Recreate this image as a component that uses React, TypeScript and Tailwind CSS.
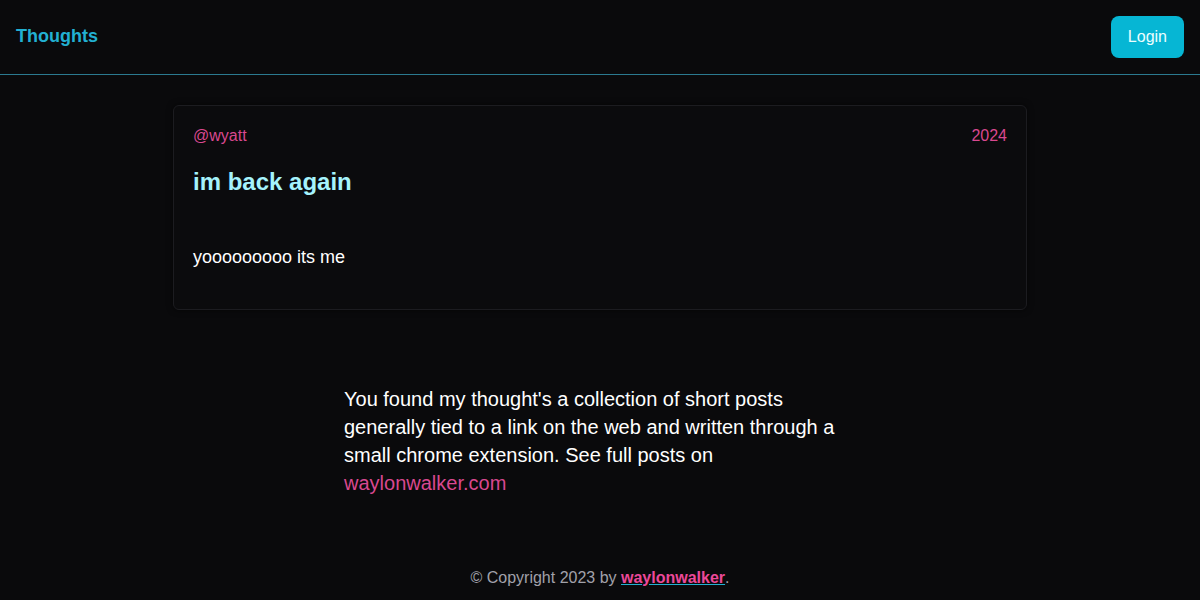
export default function App() {
  return (
    <div className="min-h-[600px] bg-[#0a0a0c] text-white flex flex-col" style={{ fontFamily: '"Liberation Sans", Arial, sans-serif' }}>
      <header className="h-[75px] border-b border-[#2b7a90] flex items-center justify-between px-4">
        <a className="text-[18px] font-bold text-[#22b0d2] leading-[24px] -mt-[3px]">Thoughts</a>
        <button className="h-[42px] px-[17px] rounded-lg bg-[#06b6d4] text-[16px] text-[#ecfeff]">Login</button>
      </header>
      <main className="flex flex-col items-center">
        <div className="mt-[30px] w-[854px] border border-[#1c1c20] rounded-md bg-[#0b0b0d] px-[19px] pt-[18px] pb-[38px] shadow-[0_0_6px_rgba(0,0,0,0.6)]">
          <div className="flex justify-between text-[16px] leading-[24px] text-[#d9488f]">
            <span>@wyatt</span>
            <span>2024</span>
          </div>
          <h2 className="mt-[18px] text-[24px] leading-[32px] font-bold text-[#a5f3fc]">im back again</h2>
          <p className="mt-[45px] text-[18px] leading-[28px] text-white">yooooooooo its me</p>
        </div>
        <p className="mt-[75px] max-w-lg w-full text-[20px] leading-[28px] text-white">
          You found my thought's a collection of short posts generally tied to a link on the web and written through a small chrome extension. See full posts on{" "}
          <a className="text-[#d9488f]">waylonwalker.com</a>
        </p>
      </main>
      <footer className="mt-[69px] text-center text-[16px] leading-[24px] text-[#a1a1aa]">
        © Copyright 2023 by{" "}
        <a className="font-bold text-[#ec4899] underline decoration-[#22b0d2]">waylonwalker</a>.
      </footer>
    </div>
  );
}
